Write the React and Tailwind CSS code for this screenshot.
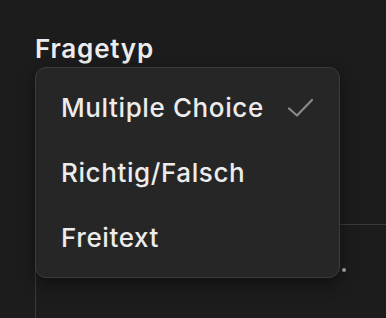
import React from 'react';

const items = ['Multiple Choice', 'Richtig/Falsch', 'Freitext'];

export default function App() {
    return (
        <div className="relative w-[386px] h-[318px] overflow-hidden bg-[#1c1c1c] font-['Inter',sans-serif] antialiased">
            {/* Field */}
            <div className="pl-[35px] pt-[34px]">
                <div className="text-[26px] leading-[30px] font-semibold text-[#ececec] tracking-[0.8px]">Fragetyp</div>
                <div className="mt-[160px] w-[420px] h-[120px] border-l border-t border-[#3a3a3a]" />
            </div>

            {/* small dot */}
            <div className="absolute left-[342px] top-[268px] w-[4px] h-[4px] rounded-full bg-[#a8a8a8]" />

            {/* Dropdown menu */}
            <div className="absolute left-[35px] top-[67px] w-[305px] rounded-[11px] border border-[#3c3c3c] bg-[#262626] py-[7px] shadow-[0_6px_16px_rgba(0,0,0,0.45)]">
                {items.map((label, i) => (
                    <div key={label} className="flex items-center h-[65px] pl-[25px] pr-[26px]">
                        <span className="text-[26px] font-medium text-[#ececec] leading-none tracking-[0.6px]">{label}</span>
                        {i === 0 && (
                            <svg className="ml-auto" width="26" height="20" viewBox="0 0 26 20" fill="none">
                                <path d="M2 10.5 L10 17.5 L25 2" stroke="#8a8a8a" strokeWidth="2.2" strokeLinecap="round" strokeLinejoin="round" />
                            </svg>
                        )}
                    </div>
                ))}
            </div>
        </div>
    );
}
